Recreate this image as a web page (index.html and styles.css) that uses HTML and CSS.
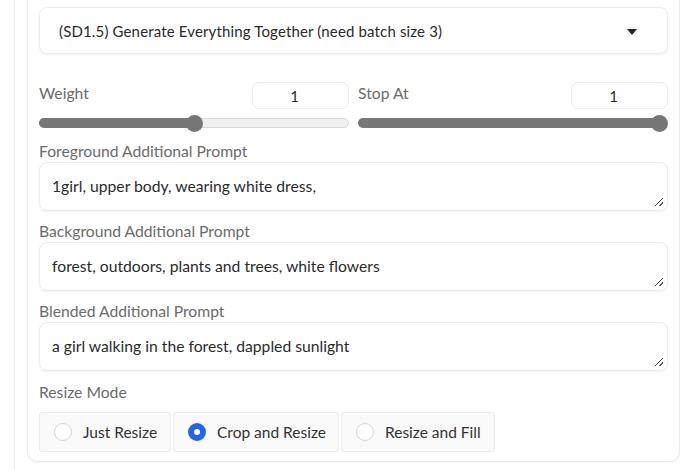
FILE: index.html
```html
<!DOCTYPE html>
<html>
<head>
<meta charset="utf-8">
<link rel="stylesheet" href="styles.css">
</head>
<body>
<div class="outer">
  <div class="panel">
    <div class="dropdown">
      <span class="dd-text">(SD1.5) Generate Everything Together (need batch size 3)</span>
      <svg class="dd-arrow" width="10" height="6" viewBox="0 0 10 6"><path d="M0 0 L10 0 L5 6 Z" fill="#222"/></svg>
    </div>
    <div class="sliders">
      <div class="slider-block">
        <div class="slider-head">
          <span class="label">Weight</span>
          <div class="num">1</div>
        </div>
        <div class="track"><div class="rail"><div class="fill" style="width: 50%"></div><div class="thumb" style="left: 50%"></div></div></div>
      </div>
      <div class="slider-block">
        <div class="slider-head">
          <span class="label">Stop At</span>
          <div class="num">1</div>
        </div>
        <div class="track"><div class="rail"><div class="fill" style="width: 100%"></div><div class="thumb" style="left: 100%"></div></div></div>
      </div>
    </div>
    <div class="field">
      <div class="label">Foreground Additional Prompt</div>
      <div class="textarea">1girl, upper body, wearing white dress,<span class="grip"></span></div>
    </div>
    <div class="field">
      <div class="label">Background Additional Prompt</div>
      <div class="textarea">forest, outdoors, plants and trees, white flowers<span class="grip"></span></div>
    </div>
    <div class="field">
      <div class="label">Blended Additional Prompt</div>
      <div class="textarea">a girl walking in the forest, dappled sunlight<span class="grip"></span></div>
    </div>
    <div class="field radios-field">
      <div class="label">Resize Mode</div>
      <div class="radios">
        <div class="radio r1"><span class="circle"></span><span>Just Resize</span></div>
        <div class="radio r2"><span class="circle checked"></span><span>Crop and Resize</span></div>
        <div class="radio r3"><span class="circle"></span><span>Resize and Fill</span></div>
      </div>
    </div>
  </div>
</div>
</body>
</html>
```

FILE: styles.css
```css
* { box-sizing: border-box; }
html, body {
  margin: 0;
  padding: 0;
  background: #ffffff;
  font-family: Lato, "Open Sans", sans-serif;
  color: #374151;
}
.outer {
  margin-left: 14px;
  height: 470px;
  border-left: 1px solid #ececec;
  padding-left: 12px;
  overflow: hidden;
}
.panel {
  width: 653px;
  border: 1px solid #e8e8e8;
  border-top: none;
  border-radius: 0 0 10px 10px;
  padding: 7px 11px 9px 11px;
  box-shadow: 0 1px 2px rgba(0,0,0,0.04);
}
.dropdown {
  height: 47px;
  border: 1px solid #ececec;
  border-radius: 8px;
  box-shadow: 0 1px 3px rgba(0,0,0,0.06);
  display: flex;
  align-items: center;
  justify-content: space-between;
  padding: 0 30px 0 19px;
  font-size: 15px;
  color: #2a2a2a;
}
.dd-text { letter-spacing: 0.15px; }
.dd-arrow { margin-top: 2px; }
.sliders {
  display: flex;
  gap: 9px;
  margin-top: 28px;
}
.slider-block { flex: 1; }
.slider-head {
  display: flex;
  justify-content: space-between;
  align-items: center;
  height: 27px;
}
.label {
  font-size: 15.7px;
  color: #6b6b6b;
  line-height: 18px;
}
.slider-head .label { margin-top: -5px; }
.num {
  width: 97px;
  height: 27px;
  border: 1px solid #ececec;
  border-radius: 7px;
  display: flex;
  align-items: center;
  justify-content: center;
  padding-right: 12px;
  font-size: 15px;
  color: #2a2a2a;
}
.track {
  position: relative;
  height: 10px;
  margin-top: 9px;
  background: #f0f0f0;
  border: 1px solid #d9d9d9;
  border-radius: 5px;
}
.rail {
  position: absolute;
  left: 7.5px;
  right: 7.5px;
  top: -1px;
  height: 10px;
}
.fill {
  position: absolute;
  left: -8.5px;
  top: 0;
  height: 10px;
  padding-left: 8.5px;
  box-sizing: content-box;
  background: #777777;
  border-radius: 5px;
}
.thumb {
  position: absolute;
  top: 50%;
  width: 17px;
  height: 17px;
  margin: -8.5px 0 0 -8.5px;
  background: #777777;
  border-radius: 50%;
}
.field { margin-top: 11px; }
.sliders + .field { margin-top: 14px; }
.field .label { margin-bottom: 2px; }
.textarea {
  position: relative;
  height: 49px;
  border: 1px solid #ececec;
  border-radius: 8px;
  box-shadow: 0 1px 3px rgba(0,0,0,0.05);
  padding: 12px 12px 10px 12px;
  font-size: 15.7px;
  line-height: 22px;
  color: #2a2a2a;
}
.grip {
  position: absolute;
  right: 4px;
  bottom: 4px;
  width: 8px;
  height: 8px;
  background:
    linear-gradient(135deg, transparent 45%, #555 45%, #555 55%, transparent 55%),
    linear-gradient(135deg, transparent 75%, #555 75%, #555 85%, transparent 85%);
}
.radios-field { margin-top: 12px; }
.radios-field .label { margin-bottom: 11px; }
.radios {
  display: flex;
  gap: 2px;
}
.radio {
  height: 40px;
  display: flex;
  align-items: center;
  gap: 11px;
  padding: 0 0 0 14px;
  border: 1px solid #ececec;
  border-radius: 3px;
  background: #fafafa;
  font-size: 15.5px;
  color: #333;
  white-space: nowrap;
  flex: none;
}
.r1 { width: 132px; }
.r2 { width: 166px; }
.r3 { width: 154px; }
.circle {
  width: 18px;
  height: 18px;
  border-radius: 50%;
  border: 1px solid #d4d4d4;
  background: #fff;
  flex: none;
}
.circle.checked {
  border: 6px solid #2563eb;
  background: #fff;
}
```
